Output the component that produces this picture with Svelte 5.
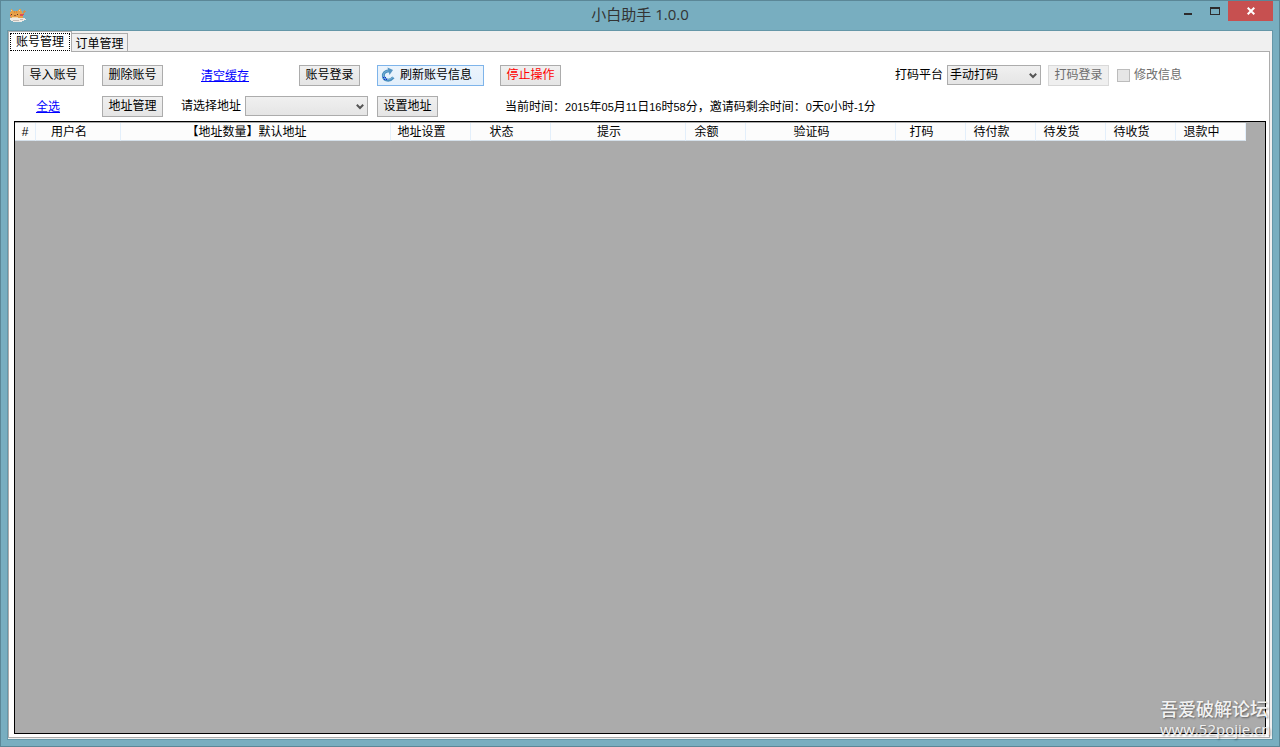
<script>
  let tab = $state('account')
  let address = $state('')
  let platform = $state('手动打码')

  const tabs = [
    { id: 'account', label: '账号管理' },
    { id: 'order',   label: '订单管理' },
  ]

  const columns = [
    { label: '#', width: 21, plain: true },
    { label: '用户名', width: 85 },
    { label: '【地址数量】默认地址', width: 270 },
    { label: '地址设置', width: 80 },
    { label: '状态', width: 80 },
    { label: '提示', width: 135 },
    { label: '余额', width: 60 },
    { label: '验证码', width: 150 },
    { label: '打码', width: 70 },
    { label: '待付款', width: 70 },
    { label: '待发货', width: 70 },
    { label: '待收货', width: 70 },
    { label: '退款中', width: 70 },
  ]

  const total = columns.reduce((sum, c) => sum + c.width, 0)
</script>

{#snippet arrow()}
  <svg class="arrow" width="8" height="6" viewBox="0 0 8 6"><path d="M0.8 0.8 L4 4 L7.2 0.8" fill="none" stroke="#555" stroke-width="2" /></svg>
{/snippet}

<div class="window">
  <header class="titlebar">
    <svg class="app-icon" width="17" height="16" viewBox="0 0 17 16">
      <path d="M2 1h1v1h1v1h5V2h1V1h2v2h1v2h1v5H2V9H1V4h1z" fill="#e5a04a" />
      <path d="M2 2h1v1H2zM10 2h1v1h-1z" fill="#f5d0a0" />
      <path d="M14 3h1V2h1v1h1v1h-1v1h-1v1h-1z" fill="#c99358" />
      <path d="M5 3h1v2H5zM7 3h1v2H7z" fill="#d88c3a" />
      <path d="M2 6h1v1H2zM8 6h1v1H8z" fill="#5e3526" />
      <path d="M11 6h4v1h-1v1h-3zM1 7h1v1H1z" fill="#dc4f56" />
      <path d="M5 7h2v1H5z" fill="#9d5a30" />
      <path d="M3 9h6v1H3z" fill="#f1d6ae" />
      <path d="M1 10h15v1h1v1h-2v1h-2v1H4v-1H2v-1H1z" fill="#eeeae4" />
      <path d="M4 12h6v1H4zM11 11h3v1h-3z" fill="#c5bab3" />
    </svg>
    <h1>小白助手 1.0.0</h1>
    <div class="controls">
      <button aria-label="最小化"><svg width="10" height="10" viewBox="0 0 10 10"><path d="M1 7h8v2H1z" fill="#2d2b2c" /></svg></button>
      <button aria-label="最大化"><svg width="10" height="8" viewBox="0 0 10 8"><path d="M0 0h10v8H0zM1 2v5h8V2z" fill="#2d2b2c" fill-rule="evenodd" /></svg></button>
      <button class="close" aria-label="关闭"><svg width="8" height="8" viewBox="0 0 8 8"><path d="M0.7 0.7 L7.3 7.3 M7.3 0.7 L0.7 7.3" stroke="#fff" stroke-width="2" /></svg></button>
    </div>
  </header>

  <main class="client">
    <div class="tabs" role="tablist">
      {#each tabs as t}
        <button role="tab" class="tab" class:active={tab === t.id} aria-selected={tab === t.id} onclick={() => tab = t.id}><span>{t.label}</span></button>
      {/each}
    </div>

    <section class="page">
      <div class="toolbar">
        <div class="actions">
          <button class="btn">导入账号</button>
          <button class="btn">删除账号</button>
          <a class="clear" href="#clear">清空缓存</a>
          <button class="btn">账号登录</button>
          <button class="btn focus">
            <svg width="16" height="16" viewBox="0 0 16 16">
              <path d="M9 3.8 C5 4 3 6.5 3.4 9.2 C4 13.4 9.5 15 13.4 10.4" fill="none" stroke="#4a8fbf" stroke-width="3" />
              <path d="M9 3.8 C5 4 3 6.5 3.4 9.2 C4 13 9 14 12.8 10.4" fill="none" stroke="#7fb4d9" stroke-width="1" />
              <path d="M7.5 0.500 L13 3 L9.5 8 Z" fill="#5594c2" />
              <path d="M3 10h1v1H3zM5 10h1v1H5zM4 12h1v1H4zM6 12h1v1H6z" fill="#1020e0" />
            </svg>
            刷新账号信息
          </button>
          <button class="btn stop">停止操作</button>

          <a class="all" href="#all">全选</a>
          <button class="btn">地址管理</button>
          <div class="field address">
            <label for="address">请选择地址</label>
            <span class="combo">
              <select id="address" bind:value={address}><option value=""></option></select>
              {@render arrow()}
            </span>
          </div>
          <button class="btn">设置地址</button>
          <p class="status">当前时间：<b>2015</b>年<b>05</b>月<b>11</b>日<b>16</b>时<b>58</b>分，邀请码剩余时间：<b>0</b>天<b>0</b>小时<b>-1</b>分</p>
        </div>

        <div class="captcha">
          <div class="field">
            <label for="platform">打码平台</label>
            <span class="combo">
              <select id="platform" bind:value={platform}><option>手动打码</option></select>
              {@render arrow()}
            </span>
          </div>
          <button class="btn" disabled>打码登录</button>
          <label class="check"><input type="checkbox" disabled />修改信息</label>
        </div>
      </div>

      <div class="grid">
        <table style="width: {total}px">
          <colgroup>
            {#each columns as c}<col style="width: {c.width}px" />{/each}
          </colgroup>
          <thead>
            <tr>
              {#each columns as c}<th class:plain={c.plain}>{c.label}</th>{/each}
            </tr>
          </thead>
          <tbody></tbody>
        </table>
      </div>
    </section>
  </main>

  <div class="watermark">
    <div>吾爱破解论坛</div>
    <div class="site">www.52pojie.cn</div>
  </div>
</div>

<style>
  :global(body) { margin: 0; }
  .window, button, select, input { font-family: "Liberation Sans", "Noto Sans CJK SC", sans-serif; font-size: 12px; color: #000; }
  .window {
    position: relative; box-sizing: border-box; min-height: 100vh; overflow: hidden;
    display: flex; flex-direction: column;
    background: #78aec0; border: 1px solid #5b8797; padding: 0 6px 6px;
    line-height: 16px;
  }
  button { cursor: default; padding: 0; margin: 0; }

  .titlebar { height: 29px; display: grid; grid-template-columns: 1fr auto 1fr; align-items: center; }
  .app-icon { margin-left: 2px; }
  h1 { margin: 0; align-self: start; font: 400 15px/27px "Open Sans", "Noto Sans CJK SC", sans-serif; color: #333; }
  .controls { display: flex; justify-content: flex-end; align-self: start; }
  .controls button { width: 27px; height: 20px; border: 0; background: none; display: flex; align-items: center; justify-content: center; }
  .controls .close { width: 45px; background: #c75050; }

  .client { flex: 1; display: flex; flex-direction: column; background: #f0f0f0; border: 1px solid #6597a8; padding: 0 2px 1px 0; }
  .tabs { display: flex; align-items: flex-end; height: 20px; }
  .tab {
    box-sizing: border-box; width: 56px; height: 18px; background: #f0f0f0;
    border: 1px solid #acacac; border-left: 0; border-bottom: 0; white-space: nowrap;
    display: flex; align-items: center; justify-content: center;
  }
  .tab.active { width: 64px; height: 21px; margin-bottom: -1px; background: #fff; border: 1px solid #acacac; border-bottom: 0; position: relative; padding: 1px; align-items: flex-start; }
  .tab.active span { flex: 1; border: 1px dotted #000; line-height: 16px; }

  .page { flex: 1; display: flex; flex-direction: column; background: #fff; border: 1px solid #acacac; padding: 12px 3px 3px 5px; }
  .toolbar { display: flex; justify-content: space-between; padding: 0 84px 4px 9px; }
  .actions {
    display: grid; grid-template-columns: 79px 79px 118px 78px 123px auto; grid-template-rows: 22px 22px;
    row-gap: 9px; align-items: center; justify-items: start; white-space: nowrap; line-height: 18px;
  }
  .btn {
    box-sizing: border-box; min-width: 61px; height: 21px; border: 1px solid #acacac;
    background: linear-gradient(#f0f0f0, #e5e5e5); line-height: 19px; white-space: nowrap;
  }
  .btn.focus { width: 107px; display: flex; align-items: center; gap: 4px; padding-left: 2px; border-color: #7eb4ea; background: linear-gradient(#ecf4fc, #e2effb); }
  .btn.stop { color: #f00; }
  .btn:disabled { color: #6d6d6d; background: #efefef; border-color: #d9d9d9; }
  a { color: #00f; text-decoration: underline; padding-top: 1px; }
  .clear { margin-left: 20px; }
  .all { margin-left: 13px; }
  .field { display: flex; align-items: center; gap: 4px; }
  .address { grid-column: 3 / 5; }
  .combo { position: relative; display: flex; width: 94px; }
  .address .combo { width: 123px; }
  select {
    appearance: none; box-sizing: border-box; width: 100%; height: 20px; border: 1px solid #acacac; border-radius: 0;
    background: linear-gradient(#f0f0f0, #e5e5e5); padding: 0 16px 0 2px; margin: 0; line-height: 18px;
  }
  .arrow { position: absolute; right: 4px; top: 8px; pointer-events: none; }
  .status { margin: 0 0 0 5px; padding-top: 2px; }
  .status b { font-weight: 400; font-size: 11px; }

  .captcha { display: flex; align-items: center; gap: 7px; height: 22px; white-space: nowrap; }
  .check { display: flex; align-items: center; gap: 4px; color: #6d6d6d; margin-left: 1px; }
  .check input { appearance: none; box-sizing: border-box; width: 13px; height: 13px; margin: 0; background: #e6e6e6; border: 1px solid #bcbcbc; }

  .grid { flex: 1; background: #ababab; border: 1px solid #000; padding-top: 1px; overflow: hidden; }
  table { table-layout: fixed; border-collapse: separate; border-spacing: 0; background: #fcfcfc; }
  th { font-weight: 400; height: 16px; line-height: 16px; padding: 1px 18px 0 0; border-right: 1px solid #e3effb; border-bottom: 1px solid #d5e0ea; text-align: center; white-space: nowrap; }
  th.plain { padding: 1px 0 0; }

  .watermark { position: absolute; right: 0; bottom: 8px; width: 119px; color: #f2f2f2; font: 500 18px/20px "Noto Sans CJK SC", sans-serif; text-shadow: 1px 1px 2px rgba(0,0,0,0.45); pointer-events: none; white-space: nowrap; }
  .watermark .site { margin-top: 2px; font: 400 15px/18px "Open Sans", sans-serif; }
</style>
